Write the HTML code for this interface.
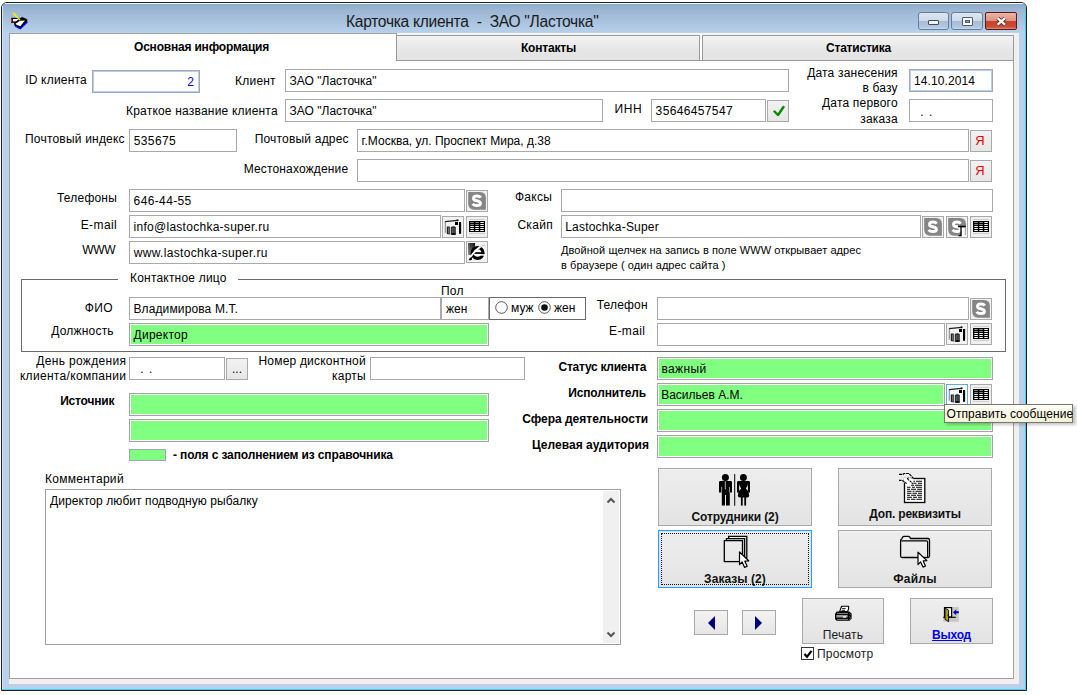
<!DOCTYPE html><html><head><meta charset="utf-8"><style>
html,body{margin:0;padding:0;background:#fff;width:1077px;height:695px;overflow:hidden;position:relative;font-family:"Liberation Sans", sans-serif;}
div,span{font-family:"Liberation Sans", sans-serif;}
.t{position:absolute;white-space:pre;line-height:1;}
.b{position:absolute;box-sizing:border-box;}
svg{position:absolute;}
</style></head><body>
<div class="b" style="left:1px;top:2px;width:1026px;height:689px;border:1px solid #202020;border-radius:6px 6px 0 0;background:#b9d1ea;"></div>
<div class="b" style="left:2px;top:3px;width:1024px;height:30px;border-radius:5px 5px 0 0;background:linear-gradient(#f4f7fb 0,#f4f7fb 1px,#8eabcc 1px,#9ab4d2 20%,#b6cfe9 95%,#bcd5ee);"></div>
<div class="b" style="left:2px;top:6px;width:1px;height:684px;background:#d6e4f3;"></div>
<div class="b" style="left:1025px;top:8px;width:1px;height:682px;background:#40d0f0;"></div>
<div class="b" style="left:2px;top:689px;width:1024px;height:1px;background:#40d0f0;"></div>
<div class="b" style="left:9px;top:33px;width:1010px;height:651px;background:#f2f0ef;"></div>
<div class="b" style="left:9px;top:35px;width:1005px;height:644px;border:1px solid #a0a0a0;border-top:none;background:#fff;"></div>
<div class="b" style="left:9px;top:33px;width:388px;height:3px;border:1px solid #a0a0a0;border-bottom:none;background:#fff;"></div>
<div class="b" style="left:397px;top:33px;width:616px;height:2px;background:#f7f5f4;"></div>
<div class="t" style="left:346px;top:13.8px;font-size:15.6px;font-weight:normal;color:#1a1a1a;letter-spacing:-0.3px;">Карточка клиента  -  ЗАО "Ласточка"</div>
<div class="b" style="left:918px;top:12px;width:31px;height:18px;border:1px solid #6a7d96;border-radius:3px;background:linear-gradient(#dde7f2 0%,#cddaea 48%,#a6bdd6 52%,#b2c7df 88%,#c9dbee 100%);"><div class="b" style="left:9px;top:7px;width:11px;height:5px;background:#f4f2ea;border:1px solid #3e4c60;border-radius:1px"></div></div>
<div class="b" style="left:951px;top:12px;width:32px;height:18px;border:1px solid #6a7d96;border-radius:3px;background:linear-gradient(#dde7f2 0%,#cddaea 48%,#a6bdd6 52%,#b2c7df 88%,#c9dbee 100%);"><div class="b" style="left:10px;top:4px;width:11px;height:9px;border:1px solid #4a5a70;background:#fff;border-radius:1px"><div class="b" style="left:2px;top:2px;width:5px;height:3px;background:#8da3bd;border:1px solid #4a5a70"></div></div></div>
<div class="b" style="left:985px;top:12px;width:32px;height:18px;border:1px solid #5a1a18;border-radius:2px;background:linear-gradient(#ecb6a8 0%,#e0927e 48%,#c4442c 52%,#c94c34 86%,#df8c74 100%);"><svg style="left:9px;top:3px" width="13" height="11" viewBox="0 0 13 11"><path d="M2.6 2.2 L10 8.6 M10 2.2 L2.6 8.6" stroke="#4a2a30" stroke-width="3.9"/><path d="M2.6 2.2 L10 8.6 M10 2.2 L2.6 8.6" stroke="#f8f8f8" stroke-width="2.3"/></svg></div>
<svg style="left:8px;top:10px" width="24" height="22" viewBox="0 0 24 22"><path d="M5 3 L12 10" stroke="#f0f000" stroke-width="1.4"/><rect x="3" y="7.8" width="8.5" height="5" fill="#000"/><rect x="3" y="8.5" width="1.3" height="3.5" fill="#ff1010"/><rect x="5" y="9" width="5.5" height="2.4" fill="#fff"/><path d="M6 13 L11 9 L14 7 L17 8.3 L19.3 9.5 L19.3 12.3 L12.3 19 L6.5 15.5 Z" fill="#000"/><path d="M7.5 13.8 L12 10.8 L17 10.5 L12.3 16.3 L8.5 14.7 Z" fill="#fff"/><path d="M7 16 L12.3 18.8 L19.3 12" fill="none" stroke="#0000ff" stroke-width="1.2"/><path d="M5 3 L12 10" stroke="#f0f000" stroke-width="1.4"/></svg>
<div class="b" style="left:396px;top:35px;width:304px;height:26px;border:1px solid #9a9a9a;background:linear-gradient(#f3f3f3,#e6e6e6 60%,#e3e3e3);"></div>
<div class="b" style="left:702px;top:35px;width:312px;height:26px;border:1px solid #9a9a9a;background:linear-gradient(#f3f3f3,#e6e6e6 60%,#e3e3e3);"></div>
<div class="b" style="left:700px;top:60px;width:2px;height:1px;background:#9a9a9a;"></div>
<div class="t" style="left:134px;top:41px;font-size:12px;font-weight:bold;color:#000;letter-spacing:-0.2px;">Основная информация</div>
<div class="t" style="left:521px;top:42px;font-size:12px;font-weight:bold;color:#000;letter-spacing:-0.2px;">Контакты</div>
<div class="t" style="left:826px;top:42px;font-size:12px;font-weight:bold;color:#000;letter-spacing:-0.2px;">Статистика</div>
<div class="t" style="left:25.2px;top:74px;font-size:12px;font-weight:normal;color:#000;letter-spacing:0.2px;">ID клиента</div>
<div class="b" style="left:92px;top:70px;width:108px;height:23px;border:1px solid #a0a8b4;box-shadow:inset 0 0 0 1px #b6d0ee;background:#fff;"></div>
<div class="t" style="right:883.00px;top:76px;font-size:12px;font-weight:normal;color:#0000ff;letter-spacing:0px;text-align:right;">2</div>
<div class="t" style="right:801.20px;top:75px;font-size:12px;font-weight:normal;color:#000;letter-spacing:0.2px;text-align:right;">Клиент</div>
<div class="b" style="left:285px;top:69px;width:504px;height:23px;border:1px solid #a9a9a9;background:#fff;"></div>
<div class="t" style="left:289.6px;top:75px;font-size:12px;font-weight:normal;color:#000;letter-spacing:0px;">ЗАО "Ласточка"</div>
<div class="t" style="right:179.20px;top:67px;font-size:12px;font-weight:normal;color:#000;letter-spacing:0.2px;text-align:right;">Дата занесения</div>
<div class="t" style="right:179.20px;top:82px;font-size:12px;font-weight:normal;color:#000;letter-spacing:0.2px;text-align:right;">в базу</div>
<div class="b" style="left:909px;top:69px;width:84px;height:23px;border:1px solid #a0a8b4;box-shadow:inset 0 0 0 1px #b6d0ee;background:#fff;"></div>
<div class="t" style="left:914px;top:75px;font-size:12px;font-weight:normal;color:#000;letter-spacing:0.1px;">14.10.2014</div>
<div class="t" style="right:799.20px;top:105px;font-size:12px;font-weight:normal;color:#000;letter-spacing:0.2px;text-align:right;">Краткое название клиента</div>
<div class="b" style="left:285px;top:99px;width:318px;height:23px;border:1px solid #a9a9a9;background:#fff;"></div>
<div class="t" style="left:289.6px;top:105px;font-size:12px;font-weight:normal;color:#000;letter-spacing:0px;">ЗАО "Ласточка"</div>
<div class="t" style="left:614.6px;top:103px;font-size:12px;font-weight:normal;color:#000;letter-spacing:0.6px;">ИНН</div>
<div class="b" style="left:651px;top:99px;width:115px;height:23px;border:1px solid #a9a9a9;background:#fff;"></div>
<div class="t" style="left:655.6px;top:105px;font-size:12px;font-weight:normal;color:#000;letter-spacing:0.36px;">35646457547</div>
<div class="b" style="left:767px;top:100px;width:22px;height:22px;border:1px solid #a9a9a9;background:linear-gradient(#f2f2f2,#e6e6e6);"><svg style="left:5px;top:4px" width="12" height="12" viewBox="0 0 12 12"><path d="M1.5 6.5 L5 10 L10.5 2" stroke="#008a00" stroke-width="2.4" fill="none" stroke-linecap="round" stroke-linejoin="round"/></svg></div>
<div class="t" style="right:179.20px;top:97px;font-size:12px;font-weight:normal;color:#000;letter-spacing:0.2px;text-align:right;">Дата первого</div>
<div class="t" style="right:179.20px;top:112.5px;font-size:12px;font-weight:normal;color:#000;letter-spacing:0.2px;text-align:right;">заказа</div>
<div class="b" style="left:909px;top:99px;width:84px;height:23px;border:1px solid #a9a9a9;background:#fff;"></div>
<div class="t" style="left:920.2px;top:106px;font-size:12px;font-weight:normal;color:#000;letter-spacing:-0.4px;">.  .</div>
<div class="t" style="left:25px;top:133px;font-size:12px;font-weight:normal;color:#000;letter-spacing:0.2px;">Почтовый индекс</div>
<div class="b" style="left:129px;top:129px;width:108px;height:23px;border:1px solid #a9a9a9;background:#fff;"></div>
<div class="t" style="left:133.8px;top:135px;font-size:12px;font-weight:normal;color:#000;letter-spacing:0.36px;">535675</div>
<div class="t" style="right:728.20px;top:133px;font-size:12px;font-weight:normal;color:#000;letter-spacing:0.2px;text-align:right;">Почтовый адрес</div>
<div class="b" style="left:357px;top:129px;width:612px;height:23px;border:1px solid #a9a9a9;background:#fff;"></div>
<div class="t" style="left:361.6px;top:135px;font-size:12px;font-weight:normal;color:#000;letter-spacing:0px;">г.Москва, ул. Проспект Мира, д.38</div>
<div class="b" style="left:970px;top:130px;width:22px;height:22px;border:1px solid #a9a9a9;background:linear-gradient(#f2f2f2,#e6e6e6);"><div class="t" style="left:-1px;top:3px;width:100%;text-align:center;color:#f00000;font-size:13px;">Я</div></div>
<div class="t" style="right:728.75px;top:163px;font-size:12px;font-weight:normal;color:#000;letter-spacing:0.15px;text-align:right;">Местонахождение</div>
<div class="b" style="left:357px;top:159px;width:612px;height:23px;border:1px solid #a9a9a9;background:#fff;"></div>
<div class="b" style="left:970px;top:160px;width:22px;height:22px;border:1px solid #a9a9a9;background:linear-gradient(#f2f2f2,#e6e6e6);"><div class="t" style="left:-1px;top:3px;width:100%;text-align:center;color:#f00000;font-size:13px;">Я</div></div>
<div class="t" style="right:960.00px;top:192px;font-size:12px;font-weight:normal;color:#000;letter-spacing:0.2px;text-align:right;">Телефоны</div>
<div class="b" style="left:129px;top:189px;width:336px;height:23px;border:1px solid #a9a9a9;background:#fff;"></div>
<div class="t" style="left:133.6px;top:195px;font-size:12px;font-weight:normal;color:#000;letter-spacing:0.37px;">646-44-55</div>
<div class="b" style="left:466px;top:190px;width:22px;height:22px;border:1px solid #a9a9a9;background:linear-gradient(#f2f2f2,#e6e6e6);background:#f0f0f0;"><svg style="left:-2px;top:-2px" width="24" height="24" viewBox="0 0 24 24"><path d="M3.2 3.1 H14.8 Q20.9 3.1 20.9 9.2 V20.7 H9.3 Q3.2 20.7 3.2 14.6 Z" fill="#858585"/><path d="M15.8 8.6 Q14.6 7 11.8 7 Q8.5 7 8.5 9.4 Q8.5 11.1 11.8 11.8 Q15.4 12.6 15.4 14.6 Q15.4 16.6 11.9 16.6 Q9 16.6 7.6 14.8" fill="none" stroke="#fff" stroke-width="3"/></svg></div>
<div class="t" style="left:515px;top:191px;font-size:12px;font-weight:normal;color:#000;letter-spacing:0.25px;">Факсы</div>
<div class="b" style="left:561px;top:189px;width:432px;height:23px;border:1px solid #a9a9a9;background:#fff;"></div>
<div class="t" style="right:959.90px;top:219px;font-size:12px;font-weight:normal;color:#000;letter-spacing:0.4px;text-align:right;">E-mail</div>
<div class="b" style="left:129px;top:215px;width:312px;height:23px;border:1px solid #a9a9a9;background:#fff;"></div>
<div class="t" style="left:133.6px;top:221px;font-size:12px;font-weight:normal;color:#000;letter-spacing:0.27px;">info@lastochka-super.ru</div>
<div class="b" style="left:442px;top:216px;width:22px;height:22px;border:1px solid #a9a9a9;background:linear-gradient(#f2f2f2,#e6e6e6);background:#f3f3f3;"><svg style="left:-2px;top:-2px" width="24" height="24" viewBox="0 0 24 24"><path d="M4.3 6.6 V17.8" stroke="#777" stroke-width="0.9"/><path d="M4 6.6 L16.5 5.3" stroke="#222" stroke-width="1.2"/><circle cx="16.6" cy="5.2" r="1" fill="#111"/><rect x="14" y="7" width="3" height="3" fill="#000"/><rect x="18" y="7" width="2.1" height="11.8" fill="#000"/><path d="M5.8 19 V11.6 H8.8 V19.4 Z" fill="#222"/><path d="M7.6 12.5 V18.5" stroke="#999" stroke-width="0.7"/><path d="M9.8 19.8 V12 Q12.3 10.4 14.8 12 V19.8 Z" fill="#2a2a2a"/><path d="M11.3 13 V19 M13 13 V19" stroke="#888" stroke-width="0.6"/><rect x="10.5" y="18.3" width="4" height="1.5" fill="#000"/></svg></div>
<div class="b" style="left:466px;top:216px;width:22px;height:22px;border:1px solid #a9a9a9;background:linear-gradient(#f2f2f2,#e6e6e6);background:#efefef;"><svg style="left:-2px;top:-2px" width="24" height="24" viewBox="0 0 24 24"><path d="M4 4.5 H20 M4 18.5 H20" stroke="#cfcfcf" stroke-width="1"/><rect x="4" y="6" width="16" height="11" fill="#000"/><path d="M5.3 7.5 H8.8 M10.3 7.5 H13.8 M5.3 9.5 H8.8 M10.3 9.5 H13.8" stroke="#888" stroke-width="1.1"/><path d="M15.3 7.5 H18.8 M15.3 9.5 H18.8 M5.3 11.5 H8.8 M10.3 11.5 H13.8 M15.3 11.5 H18.8 M5.3 13.5 H8.8 M10.3 13.5 H13.8 M15.3 13.5 H18.8 M5.3 15.5 H8.8 M10.3 15.5 H13.8 M15.3 15.5 H18.8" stroke="#fff" stroke-width="1.1"/></svg></div>
<div class="t" style="left:517.4px;top:219px;font-size:12px;font-weight:normal;color:#000;letter-spacing:0.3px;">Скайп</div>
<div class="b" style="left:561px;top:215px;width:360px;height:23px;border:1px solid #a9a9a9;background:#fff;"></div>
<div class="t" style="left:565.2px;top:221px;font-size:12px;font-weight:normal;color:#000;letter-spacing:0.2px;">Lastochka-Super</div>
<div class="b" style="left:922px;top:216px;width:22px;height:22px;border:1px solid #a9a9a9;background:linear-gradient(#f2f2f2,#e6e6e6);background:#f0f0f0;"><svg style="left:-2px;top:-2px" width="24" height="24" viewBox="0 0 24 24"><path d="M3.2 3.1 H14.8 Q20.9 3.1 20.9 9.2 V20.7 H9.3 Q3.2 20.7 3.2 14.6 Z" fill="#858585"/><path d="M15.8 8.6 Q14.6 7 11.8 7 Q8.5 7 8.5 9.4 Q8.5 11.1 11.8 11.8 Q15.4 12.6 15.4 14.6 Q15.4 16.6 11.9 16.6 Q9 16.6 7.6 14.8" fill="none" stroke="#fff" stroke-width="3"/></svg></div>
<div class="b" style="left:946px;top:216px;width:22px;height:22px;border:1px solid #a9a9a9;background:linear-gradient(#f2f2f2,#e6e6e6);background:#f0f0f0;"><svg style="left:-2px;top:-2px" width="24" height="24" viewBox="0 0 24 24"><path d="M3.2 3.1 H14.8 Q20.9 3.1 20.9 9.2 V20.7 H9.3 Q3.2 20.7 3.2 14.6 Z" fill="#858585"/><path d="M15.8 8.6 Q14.6 7 11.8 7 Q8.5 7 8.5 9.4 Q8.5 11.1 11.8 11.8 Q15.4 12.6 15.4 14.6 Q15.4 16.6 11.9 16.6 Q9 16.6 7.6 14.8" fill="none" stroke="#fff" stroke-width="3"/></svg><svg style="left:-2px;top:-2px" width="24" height="24" viewBox="0 0 24 24"><rect x="16.5" y="12.5" width="4.5" height="9" fill="#fff"/><path d="M13 11.5 H20.8 M16 11.5 V20.6 H13.5" fill="none" stroke="#000" stroke-width="1.3"/><path d="M20.3 13 V20" stroke="#999" stroke-width="1"/></svg></div>
<div class="b" style="left:970px;top:216px;width:22px;height:22px;border:1px solid #a9a9a9;background:linear-gradient(#f2f2f2,#e6e6e6);background:#efefef;"><svg style="left:-2px;top:-2px" width="24" height="24" viewBox="0 0 24 24"><path d="M4 4.5 H20 M4 18.5 H20" stroke="#cfcfcf" stroke-width="1"/><rect x="4" y="6" width="16" height="11" fill="#000"/><path d="M5.3 7.5 H8.8 M10.3 7.5 H13.8 M5.3 9.5 H8.8 M10.3 9.5 H13.8" stroke="#888" stroke-width="1.1"/><path d="M15.3 7.5 H18.8 M15.3 9.5 H18.8 M5.3 11.5 H8.8 M10.3 11.5 H13.8 M15.3 11.5 H18.8 M5.3 13.5 H8.8 M10.3 13.5 H13.8 M15.3 13.5 H18.8 M5.3 15.5 H8.8 M10.3 15.5 H13.8 M15.3 15.5 H18.8" stroke="#fff" stroke-width="1.1"/></svg></div>
<div class="t" style="right:961.70px;top:244px;font-size:12px;font-weight:normal;color:#000;letter-spacing:-0.3px;text-align:right;">WWW</div>
<div class="b" style="left:129px;top:241px;width:336px;height:23px;border:1px solid #a9a9a9;background:#fff;"></div>
<div class="t" style="left:133.8px;top:247px;font-size:12px;font-weight:normal;color:#000;letter-spacing:0.33px;">www.lastochka-super.ru</div>
<div class="b" style="left:466px;top:241px;width:22px;height:22px;border:1px solid #a9a9a9;background:linear-gradient(#f2f2f2,#e6e6e6);background:#f3f3f3;"><svg style="left:-2px;top:-2px" width="24" height="24" viewBox="0 0 24 24"><defs><linearGradient id="ieg" x1="1" y1="0" x2="0" y2="1"><stop offset="0" stop-color="#111"/><stop offset="1" stop-color="#8a8a8a"/></linearGradient></defs><rect x="3.1" y="3" width="7" height="12" fill="url(#ieg)"/><circle cx="12.6" cy="13" r="5.4" fill="#fff" stroke="#000" stroke-width="3.2"/><rect x="8.5" y="12.2" width="10.5" height="1.7" fill="#000"/><rect x="15.5" y="14.2" width="5" height="1.5" fill="#fff"/><path d="M4.2 19.6 Q8 11.5 15.5 6.6" fill="none" stroke="#fff" stroke-width="1.9"/><path d="M3.6 19.3 L6.8 16.6 L7 19.8 L4.8 20.6 Z" fill="#000"/><path d="M17 6 L20 5" stroke="#bbb" stroke-width="1"/></svg></div>
<div class="t" style="left:561px;top:245px;font-size:11px;font-weight:normal;color:#000;letter-spacing:0.07px;">Двойной щелчек на запись в поле WWW открывает адрес</div>
<div class="t" style="left:561px;top:260px;font-size:11px;font-weight:normal;color:#000;letter-spacing:0.07px;">в браузере ( один адрес сайта )</div>
<div class="b" style="left:21px;top:279px;width:985px;height:73px;border:1px solid #6a6a6a;"></div>
<div class="b" style="left:118px;top:272px;width:120px;height:14px;background:#fff;"></div>
<div class="t" style="left:130px;top:272px;font-size:12px;font-weight:normal;color:#000;letter-spacing:0.2px;">Контактное лицо</div>
<div class="t" style="left:441px;top:285px;font-size:12px;font-weight:normal;color:#000;letter-spacing:0.2px;">Пол</div>
<div class="t" style="right:963.85px;top:302px;font-size:12px;font-weight:normal;color:#000;letter-spacing:0.45px;text-align:right;">ФИО</div>
<div class="b" style="left:129px;top:297px;width:312px;height:23px;border:1px solid #a9a9a9;background:#fff;"></div>
<div class="t" style="left:133.4px;top:303px;font-size:12px;font-weight:normal;color:#000;letter-spacing:0.13px;">Владимирова М.Т.</div>
<div class="b" style="left:441px;top:297px;width:48px;height:23px;border:1px solid #a9a9a9;background:#fff;"></div>
<div class="t" style="left:446px;top:303px;font-size:12px;font-weight:normal;color:#000;letter-spacing:0px;">жен</div>
<div class="b" style="left:489px;top:297px;width:97px;height:23px;border:1px solid #6a6a6a;"></div>
<svg style="left:495px;top:301px" width="13" height="13" viewBox="0 0 13 13"><circle cx="6.5" cy="6.5" r="5.8" fill="#fff" stroke="#444" stroke-width="0.9"/></svg>
<div class="t" style="left:511px;top:302px;font-size:12px;font-weight:normal;color:#000;letter-spacing:0px;">муж</div>
<svg style="left:538px;top:301px" width="13" height="13" viewBox="0 0 13 13"><circle cx="6.5" cy="6.5" r="5.8" fill="#fff" stroke="#444" stroke-width="0.9"/><circle cx="6.5" cy="6.5" r="3.3" fill="#111"/></svg>
<div class="t" style="left:554px;top:302px;font-size:12px;font-weight:normal;color:#000;letter-spacing:0px;">жен</div>
<div class="t" style="right:429.20px;top:299px;font-size:12px;font-weight:normal;color:#000;letter-spacing:0.2px;text-align:right;">Телефон</div>
<div class="b" style="left:657px;top:297px;width:312px;height:23px;border:1px solid #a9a9a9;background:#fff;"></div>
<div class="b" style="left:970px;top:298px;width:22px;height:22px;border:1px solid #a9a9a9;background:linear-gradient(#f2f2f2,#e6e6e6);background:#f0f0f0;"><svg style="left:-2px;top:-2px" width="24" height="24" viewBox="0 0 24 24"><path d="M3.2 3.1 H14.8 Q20.9 3.1 20.9 9.2 V20.7 H9.3 Q3.2 20.7 3.2 14.6 Z" fill="#858585"/><path d="M15.8 8.6 Q14.6 7 11.8 7 Q8.5 7 8.5 9.4 Q8.5 11.1 11.8 11.8 Q15.4 12.6 15.4 14.6 Q15.4 16.6 11.9 16.6 Q9 16.6 7.6 14.8" fill="none" stroke="#fff" stroke-width="3"/></svg></div>
<div class="t" style="right:963.20px;top:325px;font-size:12px;font-weight:normal;color:#000;letter-spacing:0.2px;text-align:right;">Должность</div>
<div class="b" style="left:129px;top:323px;width:360px;height:23px;border:1px solid #a3a3a3;box-shadow:inset 0 0 0 1px #fff;background:#80ff80;"></div>
<div class="t" style="left:133.6px;top:329px;font-size:12px;font-weight:normal;color:#000;letter-spacing:0.25px;">Директор</div>
<div class="t" style="right:431.60px;top:325px;font-size:12px;font-weight:normal;color:#000;letter-spacing:0.4px;text-align:right;">E-mail</div>
<div class="b" style="left:657px;top:323px;width:288px;height:23px;border:1px solid #a9a9a9;background:#fff;"></div>
<div class="b" style="left:946px;top:323px;width:22px;height:22px;border:1px solid #a9a9a9;background:linear-gradient(#f2f2f2,#e6e6e6);background:#f3f3f3;"><svg style="left:-2px;top:-2px" width="24" height="24" viewBox="0 0 24 24"><path d="M4.3 6.6 V17.8" stroke="#777" stroke-width="0.9"/><path d="M4 6.6 L16.5 5.3" stroke="#222" stroke-width="1.2"/><circle cx="16.6" cy="5.2" r="1" fill="#111"/><rect x="14" y="7" width="3" height="3" fill="#000"/><rect x="18" y="7" width="2.1" height="11.8" fill="#000"/><path d="M5.8 19 V11.6 H8.8 V19.4 Z" fill="#222"/><path d="M7.6 12.5 V18.5" stroke="#999" stroke-width="0.7"/><path d="M9.8 19.8 V12 Q12.3 10.4 14.8 12 V19.8 Z" fill="#2a2a2a"/><path d="M11.3 13 V19 M13 13 V19" stroke="#888" stroke-width="0.6"/><rect x="10.5" y="18.3" width="4" height="1.5" fill="#000"/></svg></div>
<div class="b" style="left:970px;top:323px;width:22px;height:22px;border:1px solid #a9a9a9;background:linear-gradient(#f2f2f2,#e6e6e6);background:#efefef;"><svg style="left:-2px;top:-2px" width="24" height="24" viewBox="0 0 24 24"><path d="M4 4.5 H20 M4 18.5 H20" stroke="#cfcfcf" stroke-width="1"/><rect x="4" y="6" width="16" height="11" fill="#000"/><path d="M5.3 7.5 H8.8 M10.3 7.5 H13.8 M5.3 9.5 H8.8 M10.3 9.5 H13.8" stroke="#888" stroke-width="1.1"/><path d="M15.3 7.5 H18.8 M15.3 9.5 H18.8 M5.3 11.5 H8.8 M10.3 11.5 H13.8 M15.3 11.5 H18.8 M5.3 13.5 H8.8 M10.3 13.5 H13.8 M15.3 13.5 H18.8 M5.3 15.5 H8.8 M10.3 15.5 H13.8 M15.3 15.5 H18.8" stroke="#fff" stroke-width="1.1"/></svg></div>
<div class="t" style="right:950.72px;top:355px;font-size:12px;font-weight:normal;color:#000;letter-spacing:0.32px;text-align:right;">День рождения</div>
<div class="t" style="right:950.72px;top:370px;font-size:12px;font-weight:normal;color:#000;letter-spacing:0.32px;text-align:right;">клиента/компании</div>
<div class="b" style="left:129px;top:357px;width:96px;height:23px;border:1px solid #a9a9a9;background:#fff;"></div>
<div class="t" style="left:140.2px;top:363px;font-size:12px;font-weight:normal;color:#000;letter-spacing:-0.4px;">.  .</div>
<div class="b" style="left:226px;top:358px;width:22px;height:22px;border:1px solid #a9a9a9;background:linear-gradient(#f2f2f2,#e6e6e6);"><div class="t" style="left:0;top:4px;width:100%;text-align:center;font-size:12px;">...</div></div>
<div class="t" style="right:711.20px;top:355px;font-size:12px;font-weight:normal;color:#000;letter-spacing:0.2px;text-align:right;">Номер дисконтной</div>
<div class="t" style="right:711.20px;top:370px;font-size:12px;font-weight:normal;color:#000;letter-spacing:0.2px;text-align:right;">карты</div>
<div class="b" style="left:370px;top:357px;width:155px;height:23px;border:1px solid #a9a9a9;background:#fff;"></div>
<div class="t" style="right:430.92px;top:361px;font-size:12px;font-weight:bold;color:#000;letter-spacing:-0.28px;text-align:right;">Статус клиента</div>
<div class="b" style="left:657px;top:357px;width:336px;height:23px;border:1px solid #a3a3a3;box-shadow:inset 0 0 0 1px #fff;background:#80ff80;"></div>
<div class="t" style="left:661.4px;top:363px;font-size:12px;font-weight:normal;color:#000;letter-spacing:0.4px;">важный</div>
<div class="t" style="right:962.80px;top:395px;font-size:12px;font-weight:bold;color:#000;letter-spacing:-0.2px;text-align:right;">Источник</div>
<div class="b" style="left:129px;top:393px;width:360px;height:23px;border:1px solid #a3a3a3;box-shadow:inset 0 0 0 1px #fff;background:#80ff80;"></div>
<div class="t" style="right:431.05px;top:387px;font-size:12px;font-weight:bold;color:#000;letter-spacing:-0.15px;text-align:right;">Исполнитель</div>
<div class="b" style="left:657px;top:383px;width:288px;height:23px;border:1px solid #a3a3a3;box-shadow:inset 0 0 0 1px #fff;background:#80ff80;"></div>
<div class="t" style="left:661.2px;top:389px;font-size:12px;font-weight:normal;color:#000;letter-spacing:0px;">Васильев А.М.</div>
<div class="b" style="left:946px;top:384px;width:22px;height:22px;border:1px solid #a9a9a9;background:linear-gradient(#f2f2f2,#e6e6e6);border-color:#62a8ec;background:#f7fbff;"><svg style="left:-2px;top:-2px" width="24" height="24" viewBox="0 0 24 24"><path d="M4.3 6.6 V17.8" stroke="#777" stroke-width="0.9"/><path d="M4 6.6 L16.5 5.3" stroke="#222" stroke-width="1.2"/><circle cx="16.6" cy="5.2" r="1" fill="#111"/><rect x="14" y="7" width="3" height="3" fill="#000"/><rect x="18" y="7" width="2.1" height="11.8" fill="#000"/><path d="M5.8 19 V11.6 H8.8 V19.4 Z" fill="#222"/><path d="M7.6 12.5 V18.5" stroke="#999" stroke-width="0.7"/><path d="M9.8 19.8 V12 Q12.3 10.4 14.8 12 V19.8 Z" fill="#2a2a2a"/><path d="M11.3 13 V19 M13 13 V19" stroke="#888" stroke-width="0.6"/><rect x="10.5" y="18.3" width="4" height="1.5" fill="#000"/></svg></div>
<div class="b" style="left:970px;top:384px;width:22px;height:22px;border:1px solid #a9a9a9;background:linear-gradient(#f2f2f2,#e6e6e6);background:#efefef;"><svg style="left:-2px;top:-2px" width="24" height="24" viewBox="0 0 24 24"><path d="M4 4.5 H20 M4 18.5 H20" stroke="#cfcfcf" stroke-width="1"/><rect x="4" y="6" width="16" height="11" fill="#000"/><path d="M5.3 7.5 H8.8 M10.3 7.5 H13.8 M5.3 9.5 H8.8 M10.3 9.5 H13.8" stroke="#888" stroke-width="1.1"/><path d="M15.3 7.5 H18.8 M15.3 9.5 H18.8 M5.3 11.5 H8.8 M10.3 11.5 H13.8 M15.3 11.5 H18.8 M5.3 13.5 H8.8 M10.3 13.5 H13.8 M15.3 13.5 H18.8 M5.3 15.5 H8.8 M10.3 15.5 H13.8 M15.3 15.5 H18.8" stroke="#fff" stroke-width="1.1"/></svg></div>
<div class="b" style="left:129px;top:419px;width:360px;height:23px;border:1px solid #a3a3a3;box-shadow:inset 0 0 0 1px #fff;background:#80ff80;"></div>
<div class="t" style="right:428.80px;top:413px;font-size:12px;font-weight:bold;color:#000;letter-spacing:0.0px;text-align:right;">Сфера деятельности</div>
<div class="b" style="left:657px;top:409px;width:336px;height:23px;border:1px solid #a3a3a3;box-shadow:inset 0 0 0 1px #fff;background:#80ff80;"></div>
<div class="t" style="right:428.02px;top:439px;font-size:12px;font-weight:bold;color:#000;letter-spacing:0.02px;text-align:right;">Целевая аудитория</div>
<div class="b" style="left:657px;top:435px;width:336px;height:23px;border:1px solid #a3a3a3;box-shadow:inset 0 0 0 1px #fff;background:#80ff80;"></div>
<div class="b" style="left:129px;top:449px;width:37px;height:12px;border:1px solid #a0a4b8;background:#80ff80;"></div>
<div class="t" style="left:173px;top:449px;font-size:12px;font-weight:bold;color:#000;letter-spacing:-0.13px;">- поля с заполнением из справочника</div>
<div class="t" style="left:45px;top:473px;font-size:12px;font-weight:normal;color:#000;letter-spacing:0.3px;">Комментарий</div>
<div class="b" style="left:45px;top:489px;width:576px;height:156px;border:1px solid #a0a0a0;background:#fff;"></div>
<div class="b" style="left:603px;top:491px;width:16px;height:152px;background:#f0f0f0;"></div>
<svg style="left:606px;top:496px" width="10" height="8" viewBox="0 0 10 8"><path d="M1.5 6.5 L5 3 L8.5 6.5" stroke="#555" stroke-width="2" fill="none"/></svg>
<svg style="left:606px;top:631px" width="10" height="8" viewBox="0 0 10 8"><path d="M1.5 1.5 L5 5 L8.5 1.5" stroke="#555" stroke-width="2" fill="none"/></svg>
<div class="t" style="left:50px;top:495px;font-size:12px;font-weight:normal;color:#000;letter-spacing:0.07px;">Директор любит подводную рыбалку</div>
<div class="b" style="left:946px;top:406px;width:130px;height:19px;background:rgba(0,0,0,0.22);filter:blur(1.5px);"></div>
<div class="b" style="left:944px;top:404px;width:129px;height:19px;border:1px solid #767676;background:linear-gradient(#fffff6,#f5f2d8);"></div>
<div class="t" style="left:946.6px;top:408px;font-size:12px;font-weight:normal;color:#000;letter-spacing:0.05px;">Отправить сообщение</div>
<div class="b" style="left:658px;top:468px;width:154px;height:58px;border:1px solid #a9a9a9;background:linear-gradient(#f4f4f4 0,#ededed 2px,#e9e9e9 50%,#e3e3e3);"><svg style="left:53px;top:1px" width="44" height="40" viewBox="0 0 44 40"><circle cx="13.4" cy="7.4" r="3.5" fill="#000"/><path d="M7 12.3 Q7 11 8.3 11 H18.7 Q20 11 20 12.3 V22.5 H17.8 V35.6 H14 V25 H13 V35.6 H9.8 V22.5 H7 Z" fill="#000"/><path d="M13.3 11.3 V19.5" stroke="#fff" stroke-width="0.7"/><path d="M9.6 17 V22.5 M17.4 17 V22.5" stroke="#fff" stroke-width="0.6"/><rect x="22.2" y="4" width="1" height="31.8" fill="#000"/><circle cx="31.4" cy="7.4" r="3.5" fill="#000"/><path d="M25 12.3 Q25 11 26.3 11 H36.7 Q38 11 38 12.3 V22.5 H35.9 V14 H27.1 V22.5 H25 Z" fill="#000"/><path d="M27.3 11 H35.7 V15.5 L33.8 18.6 L36.2 21 L37.2 25.5 Q37.2 27.6 35.2 27.6 H27.8 Q25.8 27.6 25.8 25.5 L26.8 21 L29.2 18.6 L27.3 15.5 Z" fill="#000"/><rect x="28.9" y="27" width="1.8" height="8.6" fill="#000"/><rect x="32.3" y="27" width="1.8" height="8.6" fill="#000"/></svg><div class="t" style="left:0;top:42px;width:100%;text-align:center;font-size:12px;font-weight:bold;letter-spacing:-0.12px;color:#111;">Сотрудники (2)</div></div>
<div class="b" style="left:838px;top:468px;width:154px;height:58px;border:1px solid #a9a9a9;background:linear-gradient(#f4f4f4 0,#ededed 2px,#e9e9e9 50%,#e3e3e3);"><svg style="left:55px;top:1px" width="40" height="40" viewBox="0 0 40 40"><rect x="10.5" y="8.5" width="20.3" height="24" fill="#fff" stroke="#000" stroke-width="1.3"/><g stroke="#000" stroke-width="1.05"><path d="M13 11.3 H28" stroke-dasharray="0 4.5 3.5 1 5"/><path d="M13 13.3 H28" stroke-dasharray="0 5.5 4 1.5 2"/><path d="M13 15.3 H28" stroke-dasharray="0 4 3 1 5"/><path d="M13 17.3 H28" stroke-dasharray="3.5 1.5 3 1 6"/><path d="M13 19.3 H28" stroke-dasharray="3 1 5 1 5"/><path d="M13 21.3 H28" stroke-dasharray="4.5 1 2 1 6.5"/><path d="M13 23.3 H28" stroke-dasharray="4.5 1 4.5 1 4"/><path d="M13 25.3 H28" stroke-dasharray="3 1 5 1 5"/><path d="M13 27.3 H28" stroke-dasharray="5 1 4 1 4"/><path d="M13 29.3 H28" stroke-dasharray="3 1 4.5 1 5.5"/></g><path d="M9.8 7.8 H13 L19.4 8.6 V14.6 L12.5 13.8 L9.8 12.2 Z" fill="#fff"/><path d="M5 4.3 H9 L10 3.5 H15 L19.4 8.3" fill="none" stroke="#000" stroke-width="1.15" stroke-dasharray="3 0.6"/><path d="M5 10.3 H7.8 L9.8 11.3 L12.6 13.6" fill="none" stroke="#000" stroke-width="1.15" stroke-dasharray="2.6 0.6"/><path d="M13.2 9.2 L14.8 7.3 M13.6 9.2 L17.6 12.2 L18.8 14.6" fill="none" stroke="#000" stroke-width="1.05" stroke-dasharray="2 0.7"/></svg><div class="t" style="left:0;top:39px;width:100%;text-align:center;font-size:12px;font-weight:bold;letter-spacing:-0.2px;color:#111;">Доп. реквизиты</div></div>
<div class="b" style="left:658px;top:530px;width:154px;height:58px;border:1px solid #3399ff;box-shadow:inset 0 0 0 1px #cfe6fc;background:linear-gradient(#f4f4f4 0,#ededed 2px,#e9e9e9 50%,#e3e3e3);"><svg style="left:53px;top:1px" width="44" height="40" viewBox="0 0 44 40"><path d="M16.6 6.8 V4.4 H34.8 V26 H32.4" fill="none" stroke="#000" stroke-width="1.3"/><path d="M14.4 8.6 V6.7 H32.6 V28 H30.5" fill="none" stroke="#000" stroke-width="1.3"/><rect x="12.3" y="8.6" width="18.2" height="21" fill="none" stroke="#000" stroke-width="1.3"/><path d="M27.5 20 V32.6 L30.1 30 L32.6 35.4 L35.2 34.3 L32.8 29.2 L36.7 28.8 Z" fill="#fff" stroke="#000" stroke-width="1.2" stroke-linejoin="round"/></svg><div class="b" style="left:2px;top:2px;right:2px;bottom:2px;border:1px dotted #111;"></div><div class="t" style="left:0;top:42px;width:100%;text-align:center;font-size:12px;font-weight:bold;letter-spacing:0.06px;color:#111;">Заказы (2)</div></div>
<div class="b" style="left:838px;top:530px;width:154px;height:58px;border:1px solid #a9a9a9;background:linear-gradient(#f4f4f4 0,#ededed 2px,#e9e9e9 50%,#e3e3e3);"><svg style="left:55px;top:1px" width="44" height="40" viewBox="0 0 44 40"><path d="M6.6 24 V8.8 Q6.6 7.3 7.8 6.8 L8.6 5.2 Q9.2 4.3 10.2 4.3 H14.3 Q15.3 4.3 15.8 5.2 L16.6 6.5 H34 Q35.5 6.5 35.5 8 V24 Q35.5 25.5 34 25.5 H8.1 Q6.6 25.5 6.6 24 Z" fill="none" stroke="#000" stroke-width="1.3"/><path d="M7.3 8.8 H32.4 Q33.6 8.8 33.6 10 V25" fill="none" stroke="#000" stroke-width="1.2"/><path d="M24 20.2 V32.6 L26.6 29.9 L29 35.1 L31.5 34 L29.2 28.9 L32.9 28.6 Z" fill="#fff" stroke="#000" stroke-width="1.2" stroke-linejoin="round"/></svg><div class="t" style="left:0;top:42px;width:100%;text-align:center;font-size:12px;font-weight:bold;letter-spacing:0.3px;color:#111;">Файлы</div></div>
<div class="b" style="left:694px;top:610px;width:34px;height:25px;border:1px solid #a9a9a9;background:linear-gradient(#f3f3f3,#e6e6e6);"><svg style="left:13px;top:5px" width="7" height="14" viewBox="0 0 7 14"><path d="M7 0 V14 L0 7Z" fill="#000080"/></svg></div>
<div class="b" style="left:742px;top:610px;width:34px;height:25px;border:1px solid #a9a9a9;background:linear-gradient(#f3f3f3,#e6e6e6);"><svg style="left:12px;top:5px" width="7" height="14" viewBox="0 0 7 14"><path d="M0 0 V14 L7 7Z" fill="#000080"/></svg></div>
<div class="b" style="left:802px;top:598px;width:82px;height:46px;border:1px solid #a9a9a9;background:linear-gradient(#f4f4f4 0,#ededed 2px,#e9e9e9 50%,#e3e3e3);"><svg style="left:23px;top:1px" width="34" height="26" viewBox="0 0 34 26"><path d="M15.6 6.2 H22.6 V8.8 L21.6 11.6 H13.6 Z" fill="#fff" stroke="#000" stroke-width="1.1" stroke-linejoin="round"/><path d="M16.2 8.6 H19.6 M15.6 10.3 H19" stroke="#000" stroke-width="0.9"/><path d="M10.6 11.5 H23.2 L25.6 13.6 V18.6 L23.6 20.8 H10.6 L9 19 V14 Z" fill="#000"/><path d="M11 13.4 H22" stroke="#9a9a9a" stroke-width="0.9"/><rect x="10.4" y="15" width="11.2" height="2.5" fill="#9c9c9c"/><rect x="17" y="16.3" width="3.2" height="1.3" fill="#fff"/><path d="M11 19.4 H22" stroke="#8a8a8a" stroke-width="0.9"/><path d="M23.4 13.5 L24.6 14.6 M23.4 16.5 L24.6 17.6 M23.2 19.5 L24.5 18.4" stroke="#aaa" stroke-width="0.7"/></svg><div class="t" style="left:0;top:30px;width:100%;text-align:center;font-size:12px;font-weight:normal;letter-spacing:0.2px;color:#1a1a1a;">Печать</div></div>
<div class="b" style="left:910px;top:598px;width:83px;height:46px;border:1px solid #a9a9a9;background:linear-gradient(#f4f4f4 0,#ededed 2px,#e9e9e9 50%,#e3e3e3);"><svg style="left:25px;top:3px" width="30" height="24" viewBox="0 0 30 24"><rect x="7.2" y="5" width="15.6" height="14.8" fill="#c8c8c8"/><rect x="8.6" y="5.6" width="7" height="9.4" fill="#fff" stroke="#000" stroke-width="1.2"/><path d="M7.2 15.3 H19.8" stroke="#000" stroke-width="1.1"/><path d="M9 6 L12.6 8.2 V19.6 L9 17.4 Z" fill="#a6a400" stroke="#000" stroke-width="0.9" stroke-linejoin="round"/><rect x="11.4" y="12.4" width="1" height="1.2" fill="#000"/><path d="M17 10.2 L20.2 7.4 V9.2 H22.8 V11.2 H20.2 V13.2 Z" fill="#0000a8"/></svg><div class="t" style="left:0;top:30px;width:100%;text-align:center;font-size:12px;font-weight:bold;letter-spacing:-0.2px;color:#0000ee;text-decoration:underline;">Выход</div></div>
<div class="b" style="left:801px;top:647px;width:13px;height:13px;border:1px solid #333;background:#fff;"><svg style="left:1px;top:1px" width="10" height="10" viewBox="0 0 10 10"><path d="M1.5 5 L4 7.8 L8.5 1.8" stroke="#000" stroke-width="2.2" fill="none"/></svg></div>
<div class="t" style="left:817px;top:648px;font-size:12px;font-weight:normal;color:#1a1a1a;letter-spacing:0.2px;">Просмотр</div>
</body></html>
